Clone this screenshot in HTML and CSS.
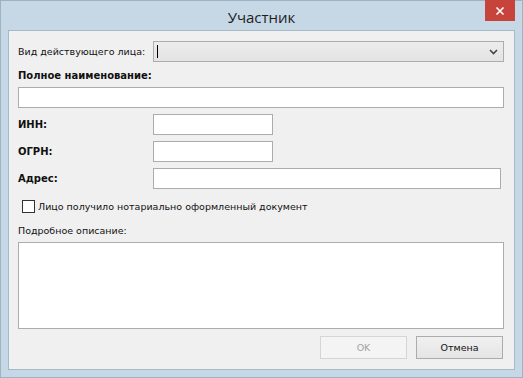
FILE: index.html
```html
<!DOCTYPE html>
<html lang="ru">
<head>
    <meta charset="UTF-8">
    <title>Участник</title>
    <link rel="stylesheet" href="styles.css">
</head>
<body>
    <div class="window">
        <div class="titlebar">
            <span class="title">Участник</span>
            <span class="close">
                <svg width="10" height="10" viewBox="0 0 10 10"><path d="M1.5 1.5 L8.5 8.5 M8.5 1.5 L1.5 8.5" stroke="#fff" stroke-width="1.6"/></svg>
            </span>
        </div>
        <div class="client">
            <div class="row first">
                <label class="label">Вид действующего лица:</label>
                <div class="combo">
                    <span class="caret"></span>
                    <svg class="chevron" width="9" height="6" viewBox="0 0 9 6"><path d="M1 1 L4.5 4.5 L8 1" fill="none" stroke="#444" stroke-width="1.6"/></svg>
                </div>
            </div>
            <div class="caption bold">Полное наименование:</div>
            <div class="field full"></div>
            <div class="row">
                <label class="label bold">ИНН:</label>
                <div class="field short"></div>
            </div>
            <div class="row">
                <label class="label bold">ОГРН:</label>
                <div class="field short"></div>
            </div>
            <div class="row">
                <label class="label bold">Адрес:</label>
                <div class="field address"></div>
            </div>
            <div class="check-row">
                <span class="checkbox"></span>
                <span>Лицо получило нотариально оформленный документ</span>
            </div>
            <div class="caption desc">Подробное описание:</div>
            <div class="field memo"></div>
            <div class="buttons">
                <button class="btn disabled">OK</button>
                <button class="btn">Отмена</button>
            </div>
        </div>
    </div>
</body>
</html>
```
FILE: styles.css
```css
html, body {
    margin: 0;
    padding: 0;
}
body {
    width: 523px;
    height: 378px;
    font-family: "DejaVu Sans", sans-serif;
    font-size: 9.5px;
    color: #111;
    overflow: hidden;
}
.window {
    box-sizing: border-box;
    width: 523px;
    height: 378px;
    background: #c6d7e5;
    border: 1px solid #9fb2c2;
    position: relative;
}
.titlebar {
    height: 29px;
    display: flex;
    align-items: center;
    justify-content: center;
}
.title {
    font-family: "Open Sans", sans-serif;
    font-size: 15px;
    color: #1e1e1e;
    margin-top: 2px;
}
.close {
    position: absolute;
    top: -1px;
    right: 7px;
    width: 30px;
    height: 21px;
    background: #c7443d;
    display: flex;
    align-items: center;
    justify-content: center;
}
.client {
    box-sizing: border-box;
    margin: 0 7px;
    height: 340px;
    background: #f0f0f0;
    border: 1px solid #a7b8c6;
    padding: 10px 10px 0 9px;
}
.row {
    display: flex;
    align-items: center;
    margin-bottom: 6px;
}
.row.first {
    margin-bottom: 0;
}
.label {
    width: 135px;
    flex: none;
}
.bold {
    font-weight: bold;
    font-size: 10px;
}
.combo {
    box-sizing: border-box;
    width: 351px;
    height: 21px;
    border: 1px solid #adadad;
    background: linear-gradient(#ececec, #e4e4e4);
    position: relative;
}
.caret {
    position: absolute;
    left: 3px;
    top: 3px;
    width: 1px;
    height: 13px;
    background: #000;
}
.chevron {
    position: absolute;
    right: 5px;
    top: 7px;
}
.caption {
    margin: 8px 0 5px 0;
    height: 12px;
    line-height: 12px;
}
.field {
    box-sizing: border-box;
    height: 21px;
    background: #fff;
    border: 1px solid #acacac;
}
.full {
    width: 486px;
    margin-bottom: 6px;
}
.short {
    width: 120px;
}
.address {
    width: 348px;
}
.check-row {
    display: flex;
    align-items: center;
    margin: 10px 0 0 4px;
    height: 14px;
}
.checkbox {
    box-sizing: border-box;
    width: 13px;
    height: 13px;
    border: 1px solid #333;
    background: #fff;
    margin-right: 3px;
}
.desc {
    margin: 12px 0 5px 0;
}
.memo {
    width: 486px;
    height: 87px;
}
.buttons {
    display: flex;
    justify-content: flex-end;
    gap: 9px;
    margin: 7px 1px 0 0;
}
.btn {
    box-sizing: border-box;
    width: 87px;
    height: 23px;
    font-family: "DejaVu Sans", sans-serif;
    font-size: 9.5px;
    color: #111;
    border: 1px solid #acacac;
    background: linear-gradient(#f0f0f0, #e5e5e5);
    padding: 0;
}
.btn.disabled {
    color: #a3a3a3;
    border-color: #d5d5d5;
    background: #f4f4f4;
}
```
